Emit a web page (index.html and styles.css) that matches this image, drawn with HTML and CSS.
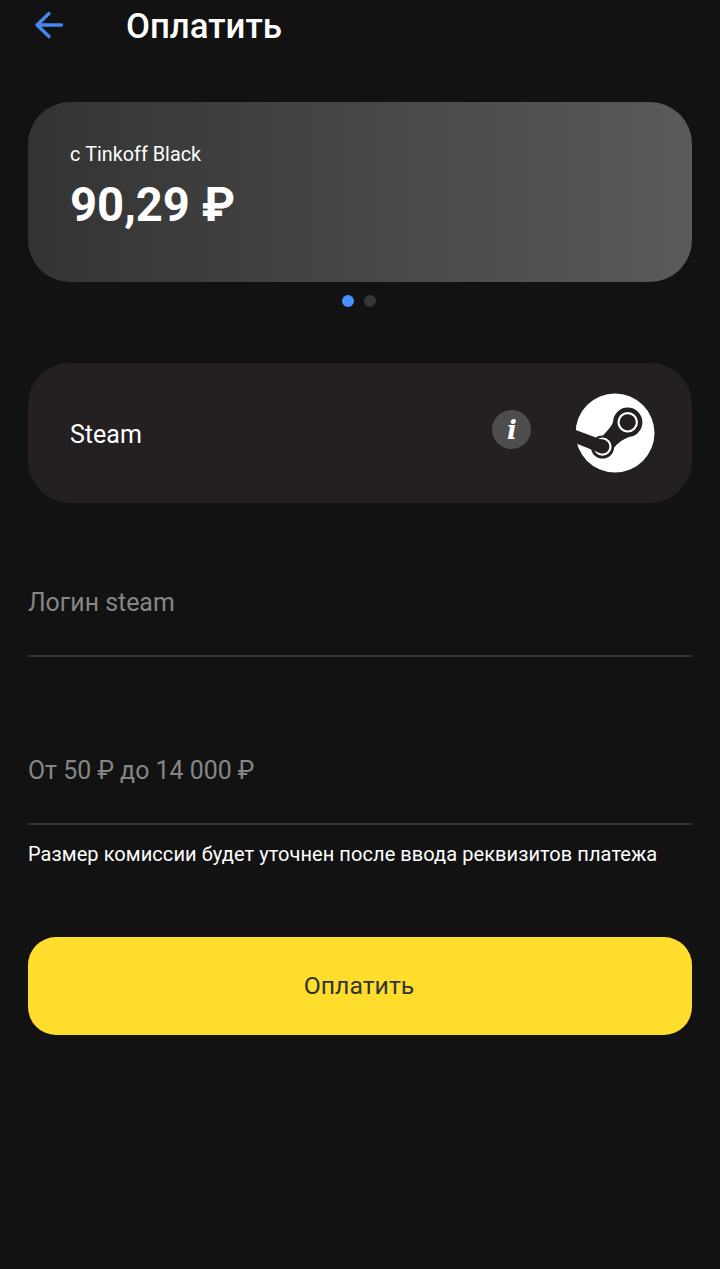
FILE: index.html
```html
<!DOCTYPE html>
<html lang="ru">
<head>
    <meta charset="UTF-8">
    <meta name="viewport" content="width=device-width, initial-scale=1.0">
    <title>Оплатить</title>
    <link rel="stylesheet" href="styles.css">
</head>
<body>

<header class="header">
    <svg class="back" width="30" height="30" viewBox="0 0 30 30">
        <path d="M15 3.5 L3 15 L15 26.5 M3 15 H27.5"/>
    </svg>
    <h1>Оплатить</h1>
</header>

<main class="container">
    <div class="account-card">
        <p class="account-name">с Tinkoff Black</p>
        <p class="balance">90,29 ₽</p>
    </div>

    <div class="dots">
        <span class="dot active"></span>
        <span class="dot"></span>
    </div>

    <div class="provider">
        <span class="provider-name">Steam</span>
        <span class="info">i</span>
        <svg class="steam-logo" width="80" height="80" viewBox="0 0 80 80">
            <circle class="light" cx="40" cy="40" r="39.5"/>
            <circle class="dark" cx="52.7" cy="29.3" r="14.7"/>
            <path class="dark" d="M38 28 C38 31 36 34 27 43.5 L38.8 55 C42 51 46 47 54 43.9 Z"/>
            <circle class="dark" cx="27.5" cy="54" r="11.6"/>
            <circle class="ring" cx="52.7" cy="29.3" r="9.2"/>
            <circle class="ring" cx="27.5" cy="53.6" r="8"/>
            <path class="dark" d="M-1 36.5 L25 46 C30 46 34 49.5 34 53.6 C34 57.6 31 60.3 27.5 60.3 C25 60.3 23 59.5 20 58 L-1 49.5 Z"/>
        </svg>
    </div>

    <div class="field">Логин steam</div>
    <div class="field amount">От 50 ₽ до 14 000 ₽</div>
    <p class="hint">Размер комиссии будет уточнен после ввода реквизитов платежа</p>

    <button class="pay">Оплатить</button>
</main>

</body>
</html>
```
FILE: styles.css
```css
* {
    margin: 0;
    padding: 0;
    box-sizing: border-box;
}

body {
    background-color: #121212;
    color: #fff;
    font-family: Roboto, 'Noto Sans', sans-serif;
    min-height: 100vh;
}

.header {
    display: flex;
    align-items: center;
    height: 50px;
    padding-left: 34px;
}

.back {
    fill: none;
    stroke: #4488f0;
    stroke-width: 3.4;
    stroke-linecap: round;
    stroke-linejoin: round;
}

h1 {
    margin-left: 62px;
    padding-top: 2px;
    font-size: 34.8px;
    font-weight: 500;
    line-height: 52px;
}

.container {
    padding: 52px 28px 0;
}

.account-card {
    height: 180px;
    padding: 41px 42px;
    border-radius: 42px;
    background: linear-gradient(to right, #333, #5a5a5a);
}

.account-name {
    font-size: 19.8px;
    line-height: 24px;
}

.balance {
    margin-top: 10px;
    font-size: 47.2px;
    font-weight: 700;
    line-height: 56px;
}

.dots {
    display: flex;
    justify-content: center;
    gap: 10px;
    padding: 13px 2px 0 0;
}

.dot {
    width: 12px;
    height: 12px;
    border-radius: 50%;
    background-color: #383635;
}

.dot.active {
    background-color: #4791ff;
}

.provider {
    display: flex;
    align-items: center;
    height: 140px;
    margin-top: 56px;
    padding: 0 37px 0 42px;
    border-radius: 42px;
    background-color: #242021;
}

.provider-name {
    flex: 1;
    padding-top: 2px;
    font-size: 25px;
}

.info {
    width: 39px;
    height: 39px;
    margin: 0 44px 7px 0;
    padding-left: 1px;
    border-radius: 50%;
    background-color: #4e4c4d;
    font-family: 'DejaVu Serif', serif;
    font-size: 26px;
    font-style: italic;
    font-weight: 700;
    line-height: 40px;
    text-align: center;
}

.steam-logo .light {
    fill: #fff;
}

.steam-logo .dark {
    fill: #242021;
}

.steam-logo .ring {
    fill: none;
    stroke: #fff;
    stroke-width: 2.2;
}

.field {
    height: 74px;
    margin-top: 80px;
    border-bottom: 2px solid #333;
    color: #868686;
    font-size: 24.9px;
    line-height: 40px;
}

.field.amount {
    margin-top: 94px;
}

.hint {
    margin-top: 17px;
    font-size: 20px;
    line-height: 24px;
    letter-spacing: 0.07px;
    white-space: nowrap;
}

.pay {
    display: block;
    width: 100%;
    height: 98px;
    margin-top: 71px;
    padding: 0 2px 2px 0;
    border: none;
    border-radius: 28px;
    background-color: #ffdd2d;
    color: #333;
    font-family: inherit;
    font-size: 24.8px;
    cursor: pointer;
}
```
